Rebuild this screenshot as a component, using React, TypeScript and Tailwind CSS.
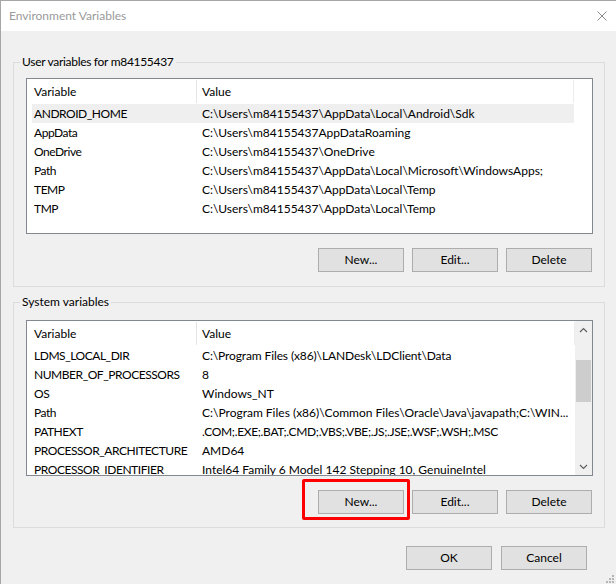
import React from "react";

const Btn = ({ children }: { children: React.ReactNode }) => (
  <div className="w-[86px] h-[24px] bg-[#e1e1e1] border border-[#adadad] flex items-center justify-center text-black">
    {children}
  </div>
);

type Row = [string, string, string?];

const userRows: Row[] = [
  ["ANDROID_HOME", "C:\\Users\\m84155437\\AppData\\Local\\Android\\Sdk"],
  ["AppData", "C:\\Users\\m84155437AppDataRoaming"],
  ["OneDrive", "C:\\Users\\m84155437\\OneDrive"],
  ["Path", "C:\\Users\\m84155437\\AppData\\Local\\Microsoft\\WindowsApps;"],
  ["TEMP", "C:\\Users\\m84155437\\AppData\\Local\\Temp"],
  ["TMP", "C:\\Users\\m84155437\\AppData\\Local\\Temp"],
];

const sysRows: Row[] = [
  ["LDMS_LOCAL_DIR", "C:\\Program Files (x86)\\LANDesk\\LDClient\\Data", "tracking-[-0.12px]"],
  ["NUMBER_OF_PROCESSORS", "8"],
  ["OS", "Windows_NT"],
  ["Path", "C:\\Program Files (x86)\\Common Files\\Oracle\\Java\\javapath;C:\\WIN..."],
  ["PATHEXT", ".COM;.EXE;.BAT;.CMD;.VBS;.VBE;.JS;.JSE;.WSF;.WSH;.MSC", "tracking-[-0.33px]"],
  ["PROCESSOR_ARCHITECTURE", "AMD64"],
  ["PROCESSOR_IDENTIFIER", "Intel64 Family 6 Model 142 Stepping 10, GenuineIntel"],
];

const Header = ({ width }: { width: string }) => (
  <div className={`h-[25px] flex shrink-0 ${width}`}>
    <div className="w-[169px] pl-[7px] flex items-center">Variable</div>
    <div className="w-px h-[23px] self-center bg-[#e5e5e5]" />
    <div className="flex-1 pl-[5px] flex items-center">Value</div>
    <div className="w-px h-[23px] self-center bg-[#ececec]" />
  </div>
);

const Rows = ({ rows, selected }: { rows: Row[]; selected?: number }) => (
  <div className="flex flex-col">
    {rows.map(([k, v, t], i) => (
      <div
        key={i}
        className={`h-[19px] shrink-0 ml-[5px] w-[542px] flex items-center whitespace-nowrap ${
          i === selected ? "bg-[#efefef]" : ""
        }`}
      >
        <div className="w-[170px] pl-[2px] overflow-hidden tracking-[-0.45px]">{k}</div>
        <div className={`flex-1 ${t ?? ""}`}>{v}</div>
      </div>
    ))}
  </div>
);

const Group = ({
  label,
  labelClass,
  height,
  pt,
  children,
}: {
  label: string;
  labelClass?: string;
  height: string;
  pt: string;
  children: React.ReactNode;
}) => (
  <div className={`relative w-[592px] border border-[#dcdcdc] pl-[12px] flex flex-col ${height} ${pt}`}>
    <span
      className={`absolute left-[6px] top-[-9px] px-[2px] bg-[#f0f0f0] leading-[16px] text-black ${labelClass ?? ""}`}
    >
      {label}
    </span>
    {children}
  </div>
);

const ButtonRow = () => (
  <div className="w-[567px] flex justify-end gap-[8px] pr-[1px]">
    <Btn>New...</Btn>
    <Btn>Edit...</Btn>
    <Btn>Delete</Btn>
  </div>
);

export default function App() {
  return (
    <div className="relative w-[616px] h-[584px] overflow-hidden bg-[#f0f0f0] border-l border-t border-[#a6a6a6] flex flex-col text-[12px] text-black font-['Lato','Liberation_Sans',sans-serif]">
      {/* title bar */}
      <div className="h-[30px] shrink-0 bg-white flex items-center justify-between pl-[8px] pr-[9px]">
        <span className="text-[#9a9a9a]">Environment Variables</span>
        <svg width="10" height="10" viewBox="0 0 10 10" className="mt-[-1px]">
          <path d="M0.5 0.5 L9.5 9.5 M9.5 0.5 L0.5 9.5" stroke="#8a8a8a" strokeWidth="1" fill="none" />
        </svg>
      </div>

      <div className="flex flex-col pl-[12px]">
        {/* User variables */}
        <div className="mt-[31px]">
          <Group
            label="User variables for m84155437"
            labelClass="tracking-[-0.3px]"
            height="h-[225px]"
            pt="pt-[15px]"
          >
            <div className="w-[567px] h-[156px] shrink-0 border border-[#828790] bg-white flex flex-col overflow-hidden">
              <Header width="w-[547px]" />
              <Rows rows={userRows} selected={0} />
            </div>
            <div className="mt-[14px]">
              <ButtonRow />
            </div>
          </Group>
        </div>

        {/* System variables */}
        <div className="mt-[15px]">
          <Group label="System variables" height="h-[226px]" pt="pt-[17px]">
            <div className="w-[567px] h-[156px] shrink-0 border border-[#828790] bg-white flex overflow-hidden">
              <div className="w-[548px] flex flex-col overflow-hidden">
                <Header width="w-[548px]" />
                <Rows rows={sysRows} />
              </div>
              <div className="w-[17px] bg-[#f0f0f0] flex flex-col items-center">
                <div className="h-[17px] w-full flex items-center justify-center">
                  <svg width="9" height="6" viewBox="0 0 9 6">
                    <path d="M1 5 L4.5 1.5 L8 5" stroke="#606060" strokeWidth="1.2" fill="none" />
                  </svg>
                </div>
                <div className="h-[22px]" />
                <div className="h-[42px] w-[15px] bg-[#cdcdcd]" />
                <div className="flex-1" />
                <div className="h-[17px] w-full flex items-center justify-center">
                  <svg width="9" height="6" viewBox="0 0 9 6">
                    <path d="M1 1 L4.5 4.5 L8 1" stroke="#606060" strokeWidth="1.2" fill="none" />
                  </svg>
                </div>
              </div>
            </div>
            <div className="mt-[14px]">
              <ButtonRow />
            </div>
          </Group>
        </div>
      </div>

      {/* OK / Cancel */}
      <div className="mt-[18px] flex justify-end gap-[9px] pr-[29px]">
        <Btn>OK</Btn>
        <Btn>Cancel</Btn>
      </div>

      {/* red annotation box around New... */}
      <div className="absolute left-[301px] top-[478px] w-[108px] h-[41px] border-[3px] border-[#ff0000] rounded-[2px]" />

      {/* size grip */}
      <svg width="12" height="12" viewBox="0 0 12 12" className="absolute right-[1px] bottom-[0px]">
        <rect x="9" y="3" width="2" height="2" fill="#b5b5b5" />
        <rect x="6" y="6" width="2" height="2" fill="#b5b5b5" />
        <rect x="9" y="6" width="2" height="2" fill="#b5b5b5" />
        <rect x="3" y="9" width="2" height="2" fill="#b5b5b5" />
        <rect x="6" y="9" width="2" height="2" fill="#b5b5b5" />
        <rect x="9" y="9" width="2" height="2" fill="#b5b5b5" />
      </svg>
    </div>
  );
}
